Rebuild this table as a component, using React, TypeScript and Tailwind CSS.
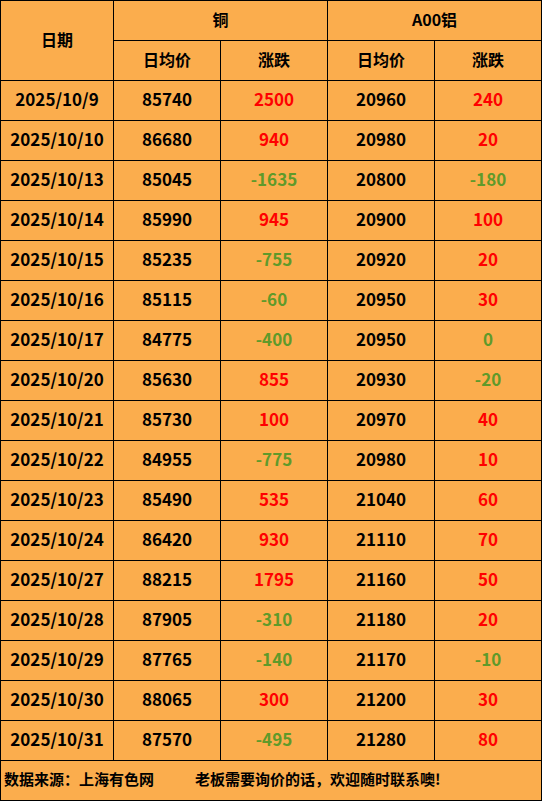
const rows: [string, number, number, number, number][] = [
  ['2025/10/9', 85740, 2500, 20960, 240],
  ['2025/10/10', 86680, 940, 20980, 20],
  ['2025/10/13', 85045, -1635, 20800, -180],
  ['2025/10/14', 85990, 945, 20900, 100],
  ['2025/10/15', 85235, -755, 20920, 20],
  ['2025/10/16', 85115, -60, 20950, 30],
  ['2025/10/17', 84775, -400, 20950, 0],
  ['2025/10/20', 85630, 855, 20930, -20],
  ['2025/10/21', 85730, 100, 20970, 40],
  ['2025/10/22', 84955, -775, 20980, 10],
  ['2025/10/23', 85490, 535, 21040, 60],
  ['2025/10/24', 86420, 930, 21110, 70],
  ['2025/10/27', 88215, 1795, 21160, 50],
  ['2025/10/28', 87905, -310, 21180, 20],
  ['2025/10/29', 87765, -140, 21170, -10],
  ['2025/10/30', 88065, 300, 21200, 30],
  ['2025/10/31', 87570, -495, 21280, 80],
];

const cell = 'border border-black text-center align-middle p-0 pb-[3px]';

function Change({ v }: { v: number }) {
  return (
    <td className={`${cell} ${v > 0 ? 'text-[#ff0000]' : 'text-[#5f9a2a]'}`}>{v}</td>
  );
}

export default function App() {
  return (
    <div
      className="h-[801px] w-[542px] bg-white text-[17px] font-bold text-black"
      style={{ fontFamily: '"Noto Sans CJK SC", "Noto Sans", sans-serif' }}
    >
      <table className="w-[541px] table-fixed border-collapse bg-[#fbad4d]">
        <colgroup>
          <col className="w-[113px]" />
          <col className="w-[107px]" />
          <col className="w-[107px]" />
          <col className="w-[107px]" />
          <col className="w-[107px]" />
        </colgroup>
        <thead className="text-[16px]">
          <tr className="h-[40px]">
            <th rowSpan={2} className={cell}>日期</th>
            <th colSpan={2} className={cell}>铜</th>
            <th colSpan={2} className={cell}>A00铝</th>
          </tr>
          <tr className="h-[40px]">
            <th className={cell}>日均价</th>
            <th className={cell}>涨跌</th>
            <th className={cell}>日均价</th>
            <th className={cell}>涨跌</th>
          </tr>
        </thead>
        <tbody>
          {rows.map(([d, cu, cuc, al, alc]) => (
            <tr key={d} className="h-[40px]">
              <td className={cell}>{d}</td>
              <td className={cell}>{cu}</td>
              <Change v={cuc} />
              <td className={cell}>{al}</td>
              <Change v={alc} />
            </tr>
          ))}
          <tr className="h-[40px]">
            <td colSpan={5} className="border border-black pl-[3px] pb-[2px] text-left align-middle text-[15px]">
              <span>数据来源：上海有色网</span>
              <span className="ml-[41px]">老板需要询价的话，欢迎随时联系噢!</span>
            </td>
          </tr>
        </tbody>
      </table>
    </div>
  );
}
